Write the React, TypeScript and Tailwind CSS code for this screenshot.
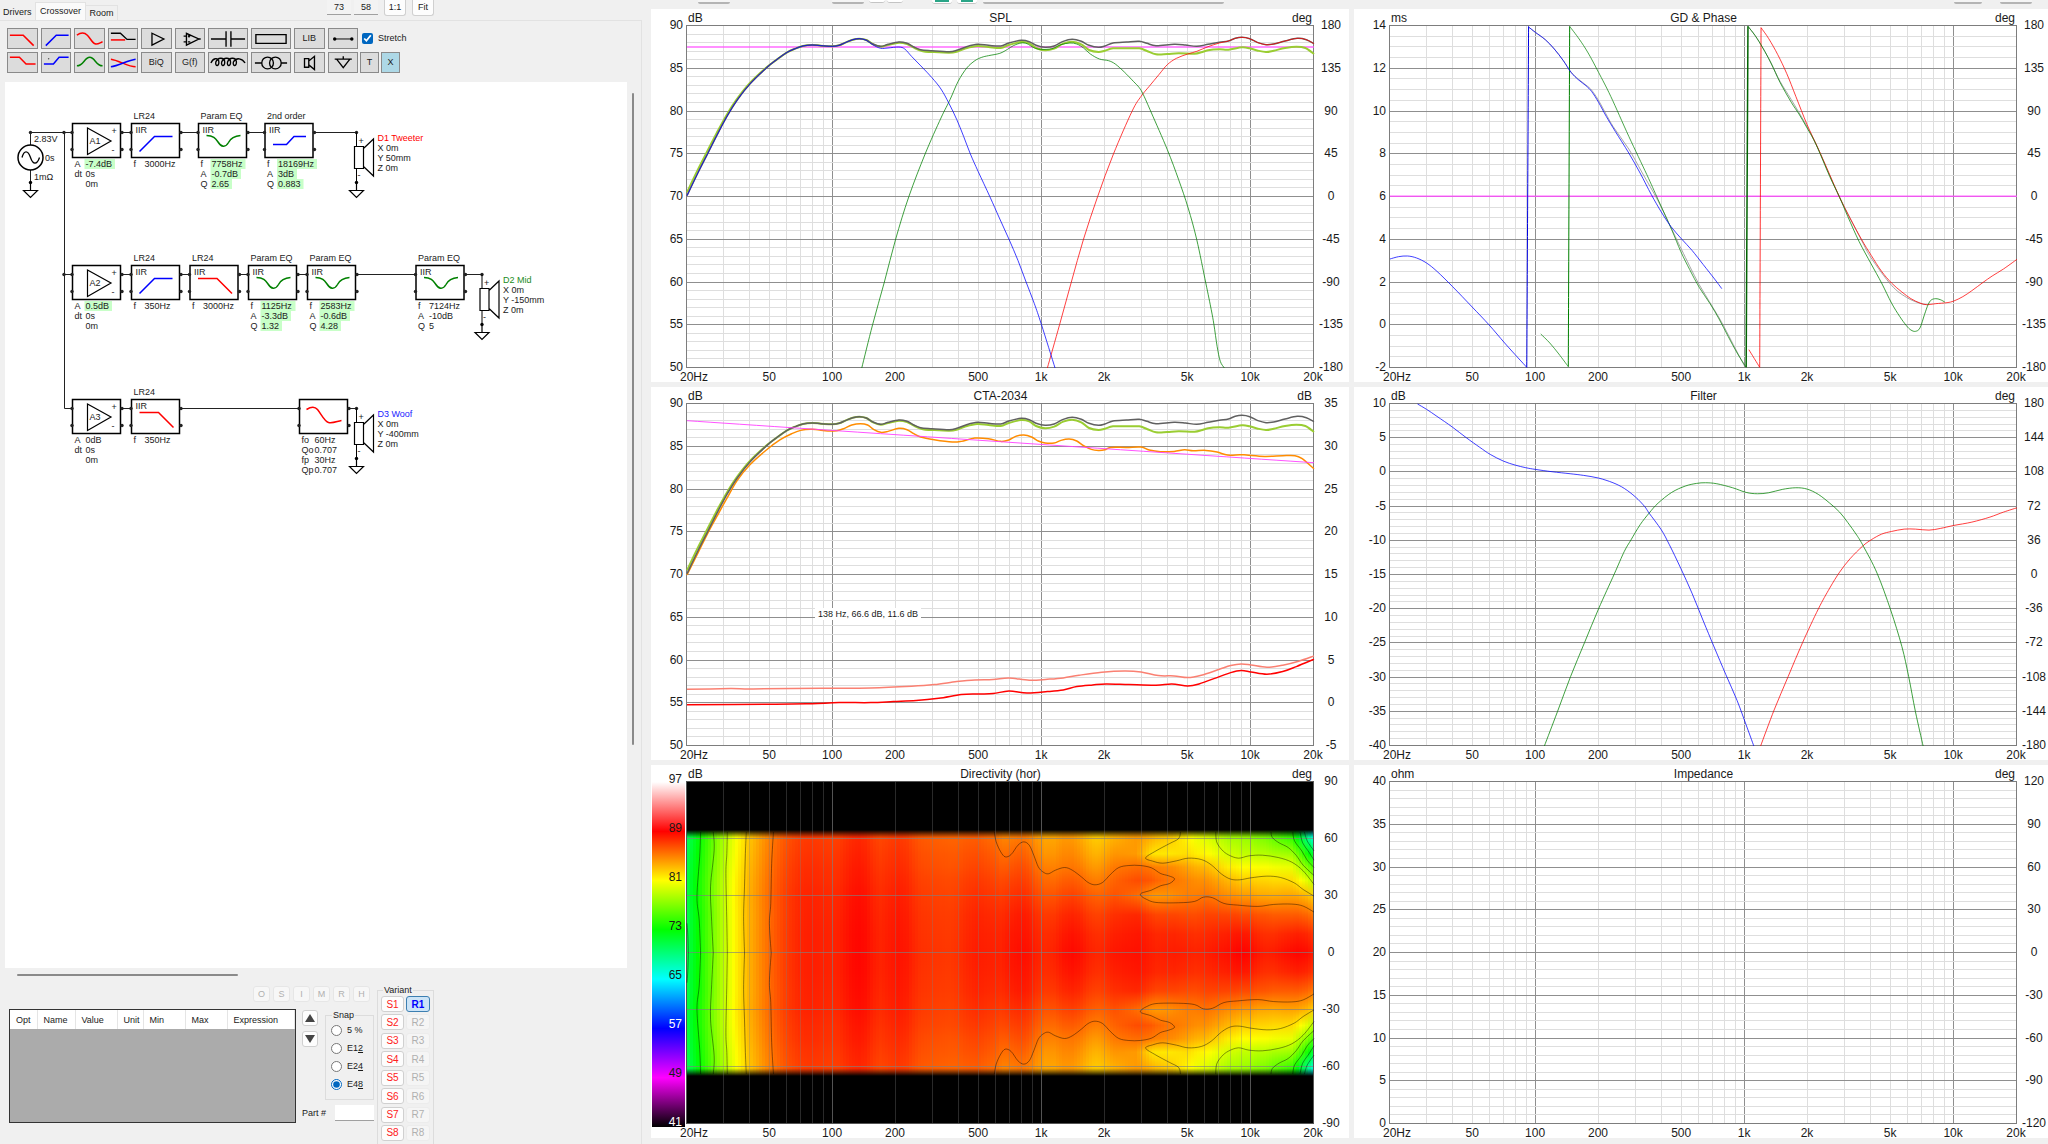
import type { ReactNode } from 'react'

type Point = [number, number]

const PLOT = { left: 36, top: 17, width: 627, height: 342 }
const PANEL = { width: 698, height: 373 }

interface Box {
  x: number
  y: number
  w: number
  h: number
}

const BOX_SPL: Box = { x: 104, y: 79, w: 1385, h: 1026 }
const BOX_GD: Box = { x: 111, y: 79, w: 1389, h: 1026 }
const BOX_CTA: Box = { x: 104, y: 73, w: 1385, h: 1025 }
const BOX_FILTER: Box = { x: 111, y: 73, w: 1389, h: 1025 }
const BOX_DIR: Box = { x: 104, y: 55, w: 1385, h: 1028 }

function pts(text: string): Point[] {
  return text
    .trim()
    .split(/\s+/)
    .map((pair) => pair.split(',').map(Number) as Point)
}

function place(points: Point[], box: Box): Point[] {
  return points.map(([x, y]) => [
    PLOT.left + ((x - box.x) / box.w) * PLOT.width,
    PLOT.top + ((y - box.y) / box.h) * PLOT.height,
  ])
}

function smooth(points: Point[]) {
  let d = `M${points[0][0].toFixed(2)} ${points[0][1].toFixed(2)}`
  for (let i = 0; i < points.length - 1; i++) {
    const p0 = points[i - 1] ?? points[i]
    const p1 = points[i]
    const p2 = points[i + 1]
    const p3 = points[i + 2] ?? p2
    const c = [
      p1[0] + (p2[0] - p0[0]) / 6,
      p1[1] + (p2[1] - p0[1]) / 6,
      p2[0] - (p3[0] - p1[0]) / 6,
      p2[1] - (p3[1] - p1[1]) / 6,
      p2[0],
      p2[1],
    ]
    d += `C${c.map((n) => n.toFixed(2)).join(' ')}`
  }
  return d
}

const TOTAL = pts(`104,588 128,520 150,461 170,407 192,351 215,301 243,253 280,204 300,182 325,158 345,146 360,139
380,136 400,138 425,140 440,137 455,128 470,120 485,117 500,121 515,133 532,140 548,134 572,127 590,131 605,142
620,150 645,153 683,156 700,152 720,142 745,134 770,137 797,139 815,130 842,122 860,126 875,137 895,143 915,139
935,125 955,119 975,125 992,137 1013,143 1027,139 1045,130 1075,127 1103,125 1120,131 1140,138 1180,134 1205,136
1230,140 1255,134 1280,128 1300,124 1315,116 1330,113 1347,117 1365,129 1383,135 1400,133 1425,124 1452,116
1472,120 1489,132`)

const LISTENING = pts(`104,578 128,510 150,452 170,399 192,345 215,297 243,250 280,203 300,182 325,158 345,146 360,139
380,136 400,138 425,140 440,137 455,128 470,120 485,117 500,121 515,134 532,141 548,136 572,129 590,133 605,144
625,155 645,157 683,159 700,156 720,146 745,139 770,142 797,145 815,136 842,127 860,131 875,145 895,152 915,147
935,132 955,126 975,134 992,151 1013,157 1027,153 1045,146 1075,146 1103,146 1120,154 1140,164 1165,163 1190,161
1225,162 1240,158 1255,152 1280,149 1300,150 1330,143 1347,146 1365,153 1383,157 1400,153 1425,145 1450,141
1470,145 1489,163`)

const SPL_WOOF = pts(`104,588 128,520 150,461 170,407 192,351 215,301 243,253 280,204 300,182 325,158 345,146 360,139
380,136 400,138 425,140 440,137 455,128 470,120 485,117 500,122 515,136 532,146 548,145 572,142 585,148 600,170
625,205 645,234 665,268 683,312 700,360 715,410 730,463 747,515 773,591 794,655 815,718 835,782 853,847 871,911
887,975 917,1105`)
const SPL_MID = pts(`490,1105 514,975 540,847 565,718 594,591 630,463 665,355 685,300 703,245 722,205 740,183 755,173
770,168 795,161 812,149 825,138 842,130 855,132 870,144 885,149 910,147 930,135 950,130 965,133 980,145 995,163
1015,178 1035,183 1050,193 1070,217 1090,245 1103,264 1112,285 1130,340 1165,450 1190,540 1211,625 1230,720
1250,850 1262,930 1268,975 1275,1040 1282,1085 1291,1105`)
const SPL_TWEETER = pts(`900,1105 927,975 953,847 980,718 1011,591 1046,463 1087,335 1107,290 1125,260 1147,224
1165,195 1185,176 1210,163 1230,155 1255,141 1280,130 1300,124 1315,116 1330,113 1347,117 1365,129 1383,135
1400,133 1425,124 1452,116 1472,120 1489,132`)

const GD_WOOF_LOW = pts('111,778 130,771 150,769 170,775 192,790 215,815 249,860 293,922 330,975 365,1030 395,1075 414,1103')
const GD_WOOF_HIGH = pts(`418,82 433,98 455,120 475,148 495,183 512,218 528,240 545,258 558,276 573,308 590,350 610,395
640,460 665,520 690,585 712,637 733,680 757,718 780,752 805,795 830,838 846,867`)
const GD_MID_LOW = pts('445,1003 465,1030 485,1063 506,1101')
const GD_MID = pts(`509,80 530,118 550,160 573,218 600,290 640,410 680,525 705,600 735,690 755,755 775,810 796,863
820,912 840,958 860,1010 880,1060 900,1103`)
const GD_MID_HIGH = pts(`904,80 920,108 937,145 955,190 975,248 1000,308 1017,343 1035,385 1055,435 1085,530 1107,593
1125,650 1150,725 1177,793 1200,850 1222,910 1240,950 1255,978 1265,991 1275,995 1285,985 1295,945 1303,915
1310,901 1320,897 1330,900 1340,907`)
const GD_TWEETER_LOW = pts('906,1050 930,1103')
const GD_TWEETER = pts(`933,84 950,117 970,165 990,222 1010,290 1035,375 1060,448 1085,525 1107,593 1130,655 1155,718
1177,767 1200,815 1222,850 1245,877 1265,897 1285,910 1300,915 1320,912 1345,909 1360,904 1380,891 1400,873
1425,848 1445,829 1470,808 1500,779`)
const GD_SUM_A = pts(`418,82 433,98 455,120 475,148 495,183 512,217 528,238 545,256 558,272 575,307 605,380 640,448
670,520 705,604 735,688 757,750 796,855 840,954 880,1057 898,1103`)
const GD_SUM_B = pts(`904,80 920,108 937,145 955,190 975,245 1000,300 1035,381 1060,449 1107,593 1155,720 1177,775
1222,857 1255,893 1285,911 1300,915`)

const CTA_POWER = pts(`104,585 128,520 150,460 170,410 192,356 215,302 243,255 280,210 310,180 335,162 355,152 380,149
415,154 435,153 450,147 468,136 487,132 503,136 517,150 532,158 548,155 572,146 590,150 605,162 620,172 650,180
690,187 710,185 740,175 770,177 797,185 815,181 830,170 848,166 865,172 880,184 895,190 915,190 930,182 948,178
965,184 980,198 997,209 1013,212 1027,210 1040,203 1075,203 1107,202 1125,211 1150,216 1180,215 1203,210 1222,213
1250,212 1275,217 1298,226 1325,225 1340,226 1380,230 1420,228 1447,228 1462,236 1489,267`)
const CTA_DI_POWER = pts(`104,928 200,926 250,927 400,925 510,924 600,919 650,914 700,905 740,900 780,899 815,894
860,901 900,898 935,894 970,886 1020,877 1070,873 1107,876 1145,887 1180,888 1210,893 1240,886 1280,868 1305,857
1328,852 1350,855 1385,862 1420,856 1455,844 1489,828`)
const CTA_DI_EARLY = pts(`104,974 300,973 380,971 440,968 510,968 560,965 610,962 660,955 710,944 745,942 780,941
815,933 855,939 900,935 935,930 965,920 1000,915 1030,912 1080,914 1140,916 1175,912 1210,918 1235,912 1280,890
1305,878 1328,872 1350,876 1385,883 1420,875 1450,860 1489,838`)

const FILTER_WOOF = pts(`172,73 192,89 215,110 249,142 280,174 310,203 333,224 362,244 388,256 412,264 433,269 470,276
510,282 540,287 573,295 605,309 630,326 655,352 675,380 685,400 712,450 730,495 755,565 780,640 805,723 828,798
855,884 880,962 900,1035 917,1098`)
const FILTER_MID = pts(`453,1098 482,995 511,890 542,788 573,687 608,582 630,515 645,480 665,435 685,400 705,370
735,338 765,319 790,311 810,309 835,312 870,324 900,338 925,342 950,339 980,329 1010,324 1035,328 1060,344
1085,370 1107,397 1125,428 1145,466 1160,500 1190,580 1220,690 1245,800 1260,890 1275,995 1292,1098`)
const FILTER_TWEETER = pts(`932,1098 962,990 993,890 1025,788 1060,687 1085,625 1107,577 1130,537 1158,499 1177,480
1200,463 1222,455 1250,448 1275,448 1305,451 1330,446 1360,437 1400,427 1440,412 1470,397 1500,384`)

const FREQ_LABELS: [number, string][] = [
  [50, '50'],
  [100, '100'],
  [200, '200'],
  [500, '500'],
  [1000, '1k'],
  [2000, '2k'],
  [5000, '5k'],
  [10000, '10k'],
  [20000, '20k'],
]

const GRID_FREQS = [10, 100, 1000, 10000].flatMap((decade) =>
  [1, 2, 3, 4, 5, 6, 7, 8, 9].map((n) => n * decade),
).filter((f) => f > 20 && f < 20000)

function freqX(f: number) {
  return PLOT.left + (Math.log10(f / 20) / 3) * PLOT.width
}

function steps(from: number, to: number, step: number) {
  const out: number[] = []
  for (let v = from; v >= to; v -= step) out.push(v)
  return out
}

interface TraceProps {
  points: Point[]
  box: Box
  color: string
  width?: number
  opacity?: number
}

function Trace({ points, box, color, width = 1, opacity = 1 }: TraceProps) {
  return (
    <path d={smooth(place(points, box))} fill="none" stroke={color} strokeWidth={width} strokeOpacity={opacity} />
  )
}

interface ChartProps {
  title: string
  leftUnit: string
  rightUnit: string
  left: number[]
  right: number[]
  minor: number
  dark?: boolean
  under?: ReactNode
  children?: ReactNode
}

function Chart({ title, leftUnit, rightUnit, left, right, minor, dark, under, children }: ChartProps) {
  const rows = right.length - 1
  const bottom = PLOT.top + PLOT.height
  const end = PLOT.left + PLOT.width
  const rowY = (i: number, n: number) => Math.round(PLOT.top + (i / n) * PLOT.height) - 0.5
  const major = dark ? 'rgba(128,128,128,0.65)' : '#8f8f8f'
  const light = dark ? 'rgba(128,128,128,0.32)' : '#dedede'

  return (
    <section className="bg-white" aria-label={title}>
      <svg
        viewBox={`0 0 ${PANEL.width} ${PANEL.height}`}
        className="block h-auto w-full overflow-visible font-['Liberation_Sans',Arial,sans-serif] text-xs"
        fill="#1a1a1a"
      >
        {under}
        <g strokeWidth="1">
          {GRID_FREQS.map((f) => (
            <line
              key={f}
              x1={Math.round(freqX(f)) - 0.5}
              x2={Math.round(freqX(f)) - 0.5}
              y1={PLOT.top}
              y2={bottom}
              stroke={[100, 1000, 10000].includes(f) ? major : light}
            />
          ))}
          {Array.from({ length: rows * minor + 1 }, (_, i) => (
            <line
              key={i}
              x1={PLOT.left}
              x2={end}
              y1={rowY(i, rows * minor)}
              y2={rowY(i, rows * minor)}
              stroke={i % minor === 0 ? major : light}
            />
          ))}
          <rect
            x={PLOT.left - 0.5}
            y={PLOT.top - 0.5}
            width={PLOT.width}
            height={PLOT.height}
            fill="none"
            stroke={dark ? '#555' : '#7d7d7d'}
          />
        </g>
        {children}
        <text x="37" y="13">
          {leftUnit}
        </text>
        <text x={PLOT.left + PLOT.width / 2} y="13" textAnchor="middle">
          {title}
        </text>
        <text x="661" y="13" textAnchor="end">
          {rightUnit}
        </text>
        {left.map((v, i) => (
          <text key={v} x="32" y={rowY(i, left.length - 1) + 3.5} textAnchor="end">
            {v}
          </text>
        ))}
        {right.map((v, i) => (
          <text key={v} x="680" y={rowY(i, rows) + 3.5} textAnchor="middle">
            {v}
          </text>
        ))}
        <text x="43" y="372" textAnchor="middle">
          20Hz
        </text>
        {FREQ_LABELS.map(([f, label]) => (
          <text key={label} x={freqX(f) - 1} y="372" textAnchor="middle">
            {label}
          </text>
        ))}
      </svg>
    </section>
  )
}

const PHASE = steps(180, -180, 45)

function HLine({ y, box }: { y: number; box: Box }) {
  const [[x1, y1], [x2, y2]] = place([[box.x, y], [box.x + box.w, y]], box)
  return <line x1={x1} x2={x2} y1={y1} y2={y2} stroke="#ff50ff" strokeWidth="1.5" strokeOpacity="0.85" />
}

function SplChart() {
  return (
    <Chart title="SPL" leftUnit="dB" rightUnit="deg" left={steps(90, 50, 5)} right={PHASE} minor={5}>
      <HLine y={142} box={BOX_SPL} />
      <Trace points={LISTENING} box={BOX_SPL} color="#9acd32" width={2} />
      <Trace points={TOTAL} box={BOX_SPL} color="#606060" width={1.5} />
      <Trace points={SPL_TWEETER} box={BOX_SPL} color="#ff0000" opacity={0.75} />
      <Trace points={SPL_MID} box={BOX_SPL} color="#008000" opacity={0.75} />
      <Trace points={SPL_WOOF} box={BOX_SPL} color="#0000ff" opacity={0.75} />
    </Chart>
  )
}

function PhaseChart() {
  return (
    <Chart title="GD & Phase" leftUnit="ms" rightUnit="deg" left={steps(14, -2, 2)} right={PHASE} minor={4}>
      <HLine y={590} box={BOX_GD} />
      <Trace points={GD_SUM_A} box={BOX_GD} color="#909090" opacity={0.8} />
      <Trace points={GD_SUM_B} box={BOX_GD} color="#909090" opacity={0.8} />
      <Trace points={GD_TWEETER_LOW} box={BOX_GD} color="#ff0000" opacity={0.75} />
      <Trace points={pts('930,1103 933,84')} box={BOX_GD} color="#ff0000" opacity={0.8} />
      <Trace points={GD_TWEETER} box={BOX_GD} color="#ff0000" opacity={0.75} />
      <Trace points={GD_MID_LOW} box={BOX_GD} color="#008000" opacity={0.7} />
      <Trace points={pts('506,1101 509,80')} box={BOX_GD} color="#008000" />
      <Trace points={GD_MID} box={BOX_GD} color="#008000" opacity={0.7} />
      <Trace points={pts('900,1103 904,80')} box={BOX_GD} color="#006400" width={1.5} />
      <Trace points={GD_MID_HIGH} box={BOX_GD} color="#008000" opacity={0.75} />
      <Trace points={GD_WOOF_LOW} box={BOX_GD} color="#0000ff" opacity={0.75} />
      <Trace points={pts('414,1103 418,80')} box={BOX_GD} color="#0000e0" />
      <Trace points={GD_WOOF_HIGH} box={BOX_GD} color="#0000ff" opacity={0.75} />
    </Chart>
  )
}

function CtaChart() {
  return (
    <Chart title="CTA-2034" leftUnit="dB" rightUnit="dB" left={steps(90, 50, 5)} right={steps(35, -5, 5)} minor={5}>
      <Trace points={CTA_POWER} box={BOX_CTA} color="#ff8c00" width={1.5} />
      <Trace points={LISTENING} box={BOX_SPL} color="#9acd32" width={2} />
      <Trace points={TOTAL} box={BOX_SPL} color="#606060" width={1.5} />
      <Trace points={pts('104,123 1489,249')} box={BOX_CTA} color="#ff40ff" opacity={0.9} />
      <Trace points={CTA_DI_POWER} box={BOX_CTA} color="#fa8072" width={1.5} />
      <Trace points={CTA_DI_EARLY} box={BOX_CTA} color="#ff0000" width={1.5} />
      <rect x="164" y="221" width="106" height="12" fill="#fff" />
      <text x="167" y="230" className="text-[9px]">
        138 Hz, 66.6 dB, 11.6 dB
      </text>
    </Chart>
  )
}

function FilterChart() {
  return (
    <Chart title="Filter" leftUnit="dB" rightUnit="deg" left={steps(10, -40, 5)} right={steps(180, -180, 36)} minor={5}>
      <Trace points={FILTER_TWEETER} box={BOX_FILTER} color="#ff0000" opacity={0.75} />
      <Trace points={FILTER_MID} box={BOX_FILTER} color="#008000" opacity={0.75} />
      <Trace points={FILTER_WOOF} box={BOX_FILTER} color="#0000ff" opacity={0.75} />
    </Chart>
  )
}

// Off-axis drop in dB: [position, one value for each of ANGLES]
const ANGLES = [0, 10, 20, 30, 38, 45, 52, 60, 64]
const DROPS: number[][] = [
  [104, 0, 0.1, 0.1, 0.4, 0.4, 0.2, 0, -0.3, -0.3],
  [200, 0, 0, 0, 0.1, 0, -0.2, -0.4, -0.6, -0.6],
  [425, 0, 0, -0.1, -0.2, -0.4, -0.5, -0.7, -0.9, -1],
  [683, 0, -0.1, -0.2, -0.4, -0.6, -0.9, -1.1, -1.4, -1.5],
  [784, 0, -0.1, -0.3, -0.7, -1.1, -1.5, -1.9, -2.4, -2.5],
  [807, 0, -0.1, -0.4, -0.9, -1.4, -2, -2.6, -3.3, -3.4],
  [848, 0, -0.2, -0.4, -1, -1.5, -2, -2.6, -3.3, -3.5],
  [895, 0, -0.2, -0.6, -1.4, -2.1, -2.8, -3.5, -4, -4.2],
  [938, 0, -0.3, -0.8, -1.7, -2.5, -3.3, -3.8, -4.3, -4.5],
  [1005, 0, -0.3, -0.9, -1.9, -2.8, -3.7, -4.5, -5.2, -5.3],
  [1050, 0, -0.3, -0.8, -1.9, -2.4, -3.1, -4, -4.8, -5],
  [1095, 0, -0.2, -0.7, -2.8, -1.9, -2.9, -4.3, -4.3, -4.5],
  [1130, 0, -0.2, -1.1, -3.8, -1.9, -2.9, -6.2, -4.7, -4.9],
  [1170, 0, -0.3, -1.3, -3.7, -2.8, -3.4, -6.4, -5.5, -5.4],
  [1211, 0, -0.4, -1.4, -3, -3.2, -4.2, -6, -6.8, -6.8],
  [1250, 0, -0.4, -1.2, -2.7, -3.6, -4.9, -6.9, -8.1, -8.2],
  [1300, 0, -0.5, -1.7, -4, -5.3, -7, -9, -10.3, -10.5],
  [1330, 0, -0.7, -2.3, -4.8, -6.4, -8, -9.9, -11, -11.2],
  [1383, 0, -0.6, -1.8, -4.4, -5.8, -7.2, -9.5, -11.2, -11.6],
  [1440, 0, -0.8, -2.6, -4.9, -6.6, -8.4, -10.8, -14, -15],
  [1489, 0, -0.9, -3, -5.8, -9.5, -13, -17, -22, -24],
]

const SCALE: [number, number[]][] = [
  [97, [255, 255, 255]],
  [89, [255, 0, 0]],
  [81, [255, 255, 0]],
  [73, [0, 255, 0]],
  [65, [0, 255, 255]],
  [57, [0, 0, 255]],
  [49, [255, 0, 255]],
  [41, [0, 0, 0]],
]

function heatColor(level: number) {
  const i = Math.min(6, Math.max(0, Math.floor((97 - level) / 8)))
  const t = (SCALE[i][0] - level) / 8
  const rgb = SCALE[i][1].map((c, k) => Math.round(c + (SCALE[i + 1][1][k] - c) * t))
  return `rgb(${rgb.join(',')})`
}

function onAxis(x: number) {
  const i = Math.max(1, TOTAL.findIndex((p) => p[0] >= x))
  const [a, b] = [TOTAL[i - 1], TOTAL[i]]
  const y = a[1] + ((x - a[0]) / (b[0] - a[0])) * (b[1] - a[1])
  return 90.3 - (y - 79) / 25.65
}

function dropAt(x: number, angle: number) {
  const i = Math.max(1, DROPS.findIndex((row) => row[0] >= x))
  const [a, b] = [DROPS[i - 1], DROPS[i]]
  const t = (x - a[0]) / (b[0] - a[0])
  return a[angle + 1] + (b[angle + 1] - a[angle + 1]) * t
}

const COLUMN = 3
const COLUMNS = Array.from({ length: PLOT.width / COLUMN }, (_, i) => {
  const x = BOX_DIR.x + (((i + 0.5) * COLUMN) / PLOT.width) * BOX_DIR.w
  return ANGLES.map((_, a) => heatColor(Math.min(89, onAxis(x) + dropAt(x, a))))
})
const STOPS = [...ANGLES.map((_, i) => ANGLES.length - 1 - i), ...ANGLES.map((_, i) => i).slice(1)]

const CONTOURS = [
  '295,205 291,300 289,420 286,480 290,569',
  '235,205 233,270 231,370 229,460 231,569',
  '193,205 192,270 190,330 192,480 193,569',
  '162,205 164,260 156,370 158,460 162,569',
  '134,205 132,280 126,400 131,470 134,569',
  '104,480 106,520 107,569',
  `783,205 787,235 797,265 807,280 820,273 835,245 848,235 860,245 870,275 880,310 890,325 902,331 918,320 938,312
   955,320 975,340 990,357 1005,364 1022,357 1040,332 1058,312 1080,306 1105,306 1130,313 1150,330 1168,337 1181,346
   1170,360 1150,367 1130,380 1108,389 1107,397 1118,407 1140,417 1190,418 1225,414 1245,401 1265,403 1290,420
   1320,425 1365,429 1400,423 1440,422 1465,428 1489,446`,
  `1194,205 1190,225 1170,240 1140,262 1117,283 1133,293 1155,299 1185,292 1211,284 1240,288 1262,304 1285,332
   1305,347 1325,349 1350,343 1385,338 1415,342 1445,358 1465,378 1489,398`,
  '1272,205 1274,235 1285,258 1300,274 1322,284 1345,277 1375,275 1410,282 1440,296 1465,322 1489,363',
  '1394,205 1397,222 1412,238 1432,252 1450,276 1465,305 1489,336',
  '1442,205 1446,232 1462,262 1474,290 1489,312',
  '1458,205 1464,238 1476,262 1489,290',
  '1468,205 1474,232 1489,262',
].map(pts)

function DirectivityChart() {
  const top = 65
  const height = 246

  const heat = (
    <>
      <defs>
        {COLUMNS.map((colors, i) => (
          <linearGradient key={i} id={`heat-${i}`} x1="0" x2="0" y1="0" y2="1">
            {STOPS.map((a, k) => {
              const sign = k < ANGLES.length ? -1 : 1
              return <stop key={k} offset={0.5 + (sign * ANGLES[a]) / 129} stopColor={colors[a]} />
            })}
          </linearGradient>
        ))}
        <linearGradient id="edge" x1="0" x2="0" y1="0" y2="1">
          <stop offset="0" stopColor="#000" />
          <stop offset="0.032" stopColor="#000" stopOpacity="0" />
          <stop offset="0.968" stopColor="#000" stopOpacity="0" />
          <stop offset="1" stopColor="#000" />
        </linearGradient>
        <linearGradient id="scale" x1="0" x2="0" y1="0" y2="1">
          {SCALE.map(([level, rgb]) => (
            <stop key={level} offset={(97 - level) / 56} stopColor={`rgb(${rgb.join(',')})`} />
          ))}
        </linearGradient>
      </defs>
      <rect x={PLOT.left} y={PLOT.top} width={PLOT.width} height={PLOT.height} fill="#000" />
      <g shapeRendering="crispEdges">
        {COLUMNS.map((_, i) => (
          <rect key={i} x={PLOT.left + i * COLUMN} y={top} width={COLUMN} height={height} fill={`url(#heat-${i})`} />
        ))}
      </g>
      <rect x={PLOT.left} y={top} width={PLOT.width} height={height} fill="url(#edge)" />
      <rect x="1" y={PLOT.top} width="33" height="345" fill="url(#scale)" />
      {SCALE.map(([level], i) => (
        <text key={level} x="31" y={18 + i * 49} textAnchor="end" fill={level === 57 || level === 41 ? '#fff' : '#1a1a1a'}>
          {level}
        </text>
      ))}
    </>
  )

  return (
    <Chart
      title="Directivity (hor)"
      leftUnit="dB"
      rightUnit="deg"
      left={[]}
      right={steps(90, -90, 30)}
      minor={1}
      dark
      under={heat}
    >
      {CONTOURS.map((points, i) => (
        <g key={i}>
          <Trace points={points} box={BOX_DIR} color="#000000" opacity={0.42} />
          <Trace points={points.map(([x, y]): Point => [x, 1138 - y])} box={BOX_DIR} color="#000000" opacity={0.42} />
        </g>
      ))}
    </Chart>
  )
}

function ImpedanceChart() {
  return (
    <Chart title="Impedance" leftUnit="ohm" rightUnit="deg" left={steps(40, 0, 5)} right={steps(120, -120, 30)} minor={5} />
  )
}

const SHAPES = {
  highpass: { d: 'M8 28L23 13H41', color: '#0000ff' },
  lowpass: { d: 'M8 13H27L42 28', color: '#ff0000' },
  notch: { d: 'M8 12C15 12 17 15 19.500 18.500C22.500 23.500 27 24.500 30 19C32 15 35 12.500 42 12', color: '#008000' },
  shelf: { d: 'M8 21H21.500L29 13H41', color: '#0000ff' },
  linkwitz: { d: 'M7 10C11 7.500 15 6.500 18 10C22 15 25 22 29 23C33 24 37 22 42 21', color: '#ff0000' },
}

interface Param {
  name: string
  value: string
  tuned?: boolean
}

interface BlockData {
  x: number
  y: number
  title?: string
  shape?: keyof typeof SHAPES
  amp?: string
  params: Param[]
}

const p = (name: string, value: string, tuned = false): Param => ({ name, value, tuned })

const ROWS = [123.5, 265.5, 399.5]

const BLOCKS: BlockData[] = [
  { x: 72.5, y: ROWS[0], amp: 'A1', params: [p('A', '-7.4dB', true), p('dt', '0s'), p('', '0m')] },
  { x: 131.5, y: ROWS[0], title: 'LR24', shape: 'highpass', params: [p('f', '3000Hz')] },
  { x: 198.5, y: ROWS[0], title: 'Param EQ', shape: 'notch', params: [p('f', '7758Hz', true), p('A', '-0.7dB', true), p('Q', '2.65', true)] },
  { x: 265, y: ROWS[0], title: '2nd order', shape: 'shelf', params: [p('f', '18169Hz', true), p('A', '3dB', true), p('Q', '0.883', true)] },
  { x: 72.5, y: ROWS[1], amp: 'A2', params: [p('A', '0.5dB', true), p('dt', '0s'), p('', '0m')] },
  { x: 131.5, y: ROWS[1], title: 'LR24', shape: 'highpass', params: [p('f', '350Hz')] },
  { x: 190, y: ROWS[1], title: 'LR24', shape: 'lowpass', params: [p('f', '3000Hz')] },
  { x: 248.5, y: ROWS[1], title: 'Param EQ', shape: 'notch', params: [p('f', '1125Hz', true), p('A', '-3.3dB', true), p('Q', '1.32', true)] },
  { x: 307.5, y: ROWS[1], title: 'Param EQ', shape: 'notch', params: [p('f', '2583Hz', true), p('A', '-0.6dB', true), p('Q', '4.28', true)] },
  { x: 416, y: ROWS[1], title: 'Param EQ', shape: 'notch', params: [p('f', '7124Hz'), p('A', '-10dB'), p('Q', '5')] },
  { x: 72.5, y: ROWS[2], amp: 'A3', params: [p('A', '0dB'), p('dt', '0s'), p('', '0m')] },
  { x: 131.5, y: ROWS[2], title: 'LR24', shape: 'lowpass', params: [p('f', '350Hz')] },
  { x: 299.5, y: ROWS[2], shape: 'linkwitz', params: [p('fo', '60Hz'), p('Qo', '0.707'), p('fp', '30Hz'), p('Qp', '0.707')] },
]

function textWidth(value: string) {
  const widths: Record<string, number> = { '.': 2.5, '-': 3, H: 6.5, z: 4.5, B: 6 }
  return [...value].reduce((sum, c) => sum + (widths[c] ?? 5), 0)
}

function Block({ x, y, title, shape, amp, params }: BlockData) {
  return (
    <g transform={`translate(${x} ${y})`}>
      <rect width="48" height="34" fill="#fff" stroke="#000" strokeWidth="1.500" />
      {[-0.5, 49.5].flatMap((cx) =>
        [9, 26].map((cy) => <circle key={`${cx}-${cy}`} cx={cx} cy={cy} r="1.700" />),
      )}
      {title && (
        <text x="2" y="-5">
          {title}
        </text>
      )}
      {amp && (
        <>
          <path d="M15 4.500V31L38.500 17.500Z" fill="none" stroke="#000" strokeWidth="1.200" />
          <text x="17" y="20">
            {amp}
          </text>
          <text x="39" y="10">
            +
          </text>
          <text x="39" y="29">
            -
          </text>
        </>
      )}
      {title && shape && (
        <text x="4" y="9">
          IIR
        </text>
      )}
      {shape && <path d={SHAPES[shape].d} fill="none" stroke={SHAPES[shape].color} strokeWidth="1.500" />}
      {params.map(({ name, value, tuned }, i) => (
        <g key={i} transform={`translate(0 ${43.5 + i * 10})`}>
          {tuned && <rect x="12" y="-8" width={textWidth(value) + 4} height="10" fill="#c8ffc8" />}
          <text x="2">{name}</text>
          <text x={shape === 'linkwitz' ? 15 : 13}>{value}</text>
        </g>
      ))}
    </g>
  )
}

function Ground({ x, y }: { x: number; y: number }) {
  return (
    <g transform={`translate(${x} ${y})`} fill="none" stroke="#000">
      <circle r="1.700" fill="#000" stroke="none" />
      <path d="M0 0V8M-7 8H7L0 15Z" strokeWidth="1.200" />
    </g>
  )
}

interface SpeakerProps {
  x: number
  y: number
  name: string
  color: string
  offset: string
}

function Speaker({ x, y, name, color, offset }: SpeakerProps) {
  return (
    <>
      <g transform={`translate(${x} ${y})`}>
        <circle r="1.700" />
        <path d="M0 0V14M0 36V50" stroke="#000" />
        <path d="M-2 14H7V36H-2ZM7 16L17 6.500V43.500L7 34" fill="none" stroke="#000" strokeWidth="1.200" />
        <text x="2" y="11">
          +
        </text>
        <text x="1" y="45">
          -
        </text>
        <text x="21" y="8" fill={color}>
          {name}
        </text>
        {['X 0m', offset, 'Z 0m'].map((line, i) => (
          <text key={line} x="21" y={18 + i * 10}>
            {line}
          </text>
        ))}
      </g>
      <Ground x={x} y={y + 50} />
    </>
  )
}

function Schematic() {
  return (
    <svg
      viewBox="5 82 622 400"
      className="block h-auto w-full font-['Liberation_Sans',Arial,sans-serif] text-[9px]"
      fill="#222"
    >
      <path
        d="M30.500 182V132.500H356.500M64.500 132.500V408.500M64.500 274.500H482.500M64.500 408.500H356.500"
        fill="none"
        stroke="#222"
      />
      <circle cx="30.500" cy="132.500" r="1.700" />
      <circle cx="64" cy="132.500" r="1.700" />
      <circle cx="64" cy="274.500" r="1.700" />
      <circle cx="30.500" cy="157.500" r="12.500" fill="#fff" stroke="#000" strokeWidth="1.500" />
      <path d="M22 157.500C24 150 28 150 30.500 157.500S37 165 39.500 157.500" fill="none" stroke="#000" strokeWidth="1.300" />
      <text x="34" y="142">
        2.83V
      </text>
      <text x="45" y="161">
        0s
      </text>
      <text x="34" y="180">
        1mΩ
      </text>
      <Ground x={30.5} y={182.5} />
      {BLOCKS.map((block) => (
        <Block key={`${block.x}-${block.y}`} {...block} />
      ))}
      <Speaker x={356.5} y={132.5} name="D1 Tweeter" color="#ff0000" offset="Y 50mm" />
      <Speaker x={482} y={274.5} name="D2 Mid" color="#228b22" offset="Y -150mm" />
      <Speaker x={356.5} y={408.5} name="D3 Woof" color="#2222ff" offset="Y -400mm" />
    </svg>
  )
}

interface Tool {
  label: string
  wide?: boolean
  icon?: ReactNode
}

const RED = { stroke: '#ff0000', strokeWidth: 1.6 }
const BLUE = { stroke: '#0000ff', strokeWidth: 1.6 }
const BLACK = { stroke: '#000', strokeWidth: 1.4 }

const TOOLS: Tool[][] = [
  [
    { label: 'Low pass', icon: <path d="M2 7H16L27 18" {...RED} /> },
    { label: 'High pass', icon: <path d="M4 18L15 7H28" {...BLUE} /> },
    { label: 'Linkwitz transform', icon: <path d="M2 7C6 4 10 4 13 7S18 15 21 16S26 15 29 14" {...RED} /> },
    {
      label: 'Crossover pair',
      icon: (
        <>
          <path d="M2 12H17" {...RED} />
          <path d="M2 5H12L19 11.500H28" {...BLACK} />
        </>
      ),
    },
    { label: 'Amplifier', icon: <path d="M10.500 5V17.500L23 11Z" {...BLACK} /> },
    { label: 'Operational amplifier', icon: <path d="M11 5V17.500L24 11ZM8 8H11M8 14H11M24 11H26M12.500 8H15M12.500 14H15M13.700 6.500V9.500" {...BLACK} /> },
    { label: 'Capacitor', wide: true, icon: <path d="M2 11H17M23 11H37M17.500 3V19M22.500 3V19" {...BLACK} /> },
    { label: 'Resistor', wide: true, icon: <path d="M4 6.500H35V15.500H4Z" {...BLACK} /> },
    { label: 'LIB' },
    {
      label: 'Wire',
      icon: (
        <>
          <path d="M6 11H24" stroke="#000" />
          <circle cx="6" cy="11" r="1.800" fill="#000" />
          <circle cx="24" cy="11" r="1.800" fill="#000" />
        </>
      ),
    },
  ],
  [
    { label: 'Low shelf', icon: <path d="M2 5H12L19 12H29" {...RED} /> },
    {
      label: 'High shelf',
      icon: (
        <>
          <path d="M2 12H12L18 5H28" {...BLUE} />
          <circle cx="7" cy="6.500" r="0.800" fill="#555" />
        </>
      ),
    },
    { label: 'Peak', icon: <path d="M2 14C9 14 10 5 15.500 5S22 14 29 14" stroke="#008000" strokeWidth="1.600" /> },
    {
      label: 'Phase',
      icon: (
        <>
          <path d="M2 7C10 8 20 15 28 15" {...RED} />
          <path d="M2 15C10 14 20 8 28 7" {...BLUE} />
        </>
      ),
    },
    { label: 'BiQ' },
    { label: 'G(f)' },
    {
      label: 'Inductor',
      wide: true,
      icon: (
        <path
          d="M2 11C4 6 9 5 10 9C11 15 6 15 7 10C9 5 15 5 16 9C17 15 12 15 13 10C15 5 21 5 22 9C23 15 18 15 19 10C21 5 27 5 28 9C29 15 24 15 25 10C28 5 34 6 37 11"
          {...BLACK}
        />
      ),
    },
    {
      label: 'Transformer',
      wide: true,
      icon: (
        <>
          <circle cx="16" cy="11" r="6" {...BLACK} />
          <circle cx="24" cy="11" r="6" {...BLACK} />
          <path d="M3 11H10M30 11H36" {...BLACK} />
        </>
      ),
    },
    { label: 'Driver', icon: <path d="M10 6.500H14.500V15.500H10ZM14.500 9L20.500 4V18L14.500 13" {...BLACK} /> },
    { label: 'Ground', icon: <path d="M6 7H24M8 7L15 16L22 7M15 4V7" {...BLACK} /> },
  ],
]

function Toolbar() {
  return (
    <div className="mt-[7px] ml-[7px] flex flex-col gap-[3px]">
      {TOOLS.map((row, r) => (
        <div key={r} className="flex items-center gap-[2px]">
          <div className="flex w-[351px] gap-[3px]">
            {row.map(({ label, wide, icon }) => (
              <button
                key={label}
                type="button"
                aria-label={label}
                className={`flex h-[21px] items-center justify-center overflow-hidden border border-[#8a8a8a] bg-[#dcdcdc] ${wide ? 'w-10 shrink-0' : 'flex-1'}`}
              >
                {icon ? (
                  <svg viewBox={wide ? '0 0 39 21' : '0 0 30 21'} className="h-[21px] w-full" fill="none">
                    {icon}
                  </svg>
                ) : (
                  label
                )}
              </button>
            ))}
          </div>
          {r === 0 ? (
            <label className="flex items-center gap-[5px] pl-[2px]">
              <input type="checkbox" defaultChecked className="size-[11px] accent-[#0067c0]" />
              Stretch
            </label>
          ) : (
            <>
              <button type="button" className="h-[21px] w-[19px] border border-[#8a8a8a] bg-[#dcdcdc]">
                T
              </button>
              <button type="button" className="h-[21px] w-[19px] border border-[#8a8a8a] bg-[#add8e6]">
                X
              </button>
            </>
          )}
        </div>
      ))}
    </div>
  )
}

function TabStrip() {
  return (
    <header className="flex h-[21px] items-end border-b border-[#e2e2e2]">
      <nav className="flex h-full items-end">
        <a href="#drivers" className="flex h-[15px] w-[35px] items-center pl-[3px]">
          Drivers
        </a>
        <a
          href="#crossover"
          aria-current="page"
          className="flex h-[18px] w-[51px] items-center justify-center border-x border-t border-[#e2e2e2] bg-[#fafafa]"
        >
          Crossover
        </a>
        <a href="#room" className="flex h-[15px] w-8 items-center justify-center border-t border-r border-[#e2e2e2]">
          Room
        </a>
      </nav>
      <div className="ml-[209px] flex h-full items-start gap-[3px]">
        {['73', '58'].map((value) => (
          <button key={value} type="button" className="h-[15px] w-6 border-b border-[#a0a0a0] bg-[#f3f3f3]">
            {value}
          </button>
        ))}
        {['1:1', 'Fit'].map((value) => (
          <button
            key={value}
            type="button"
            className="ml-[3px] h-4 w-[22px] rounded-b-[3px] border border-t-0 border-[#d0d0d0] bg-[#fdfdfd]"
          >
            {value}
          </button>
        ))}
      </div>
    </header>
  )
}

const COLUMN_HEADS: [string, string][] = [
  ['Opt', 'w-[27px]'],
  ['Name', 'w-[38px]'],
  ['Value', 'w-[42px]'],
  ['Unit', 'w-[26px]'],
  ['Min', 'w-[42px]'],
  ['Max', 'w-[42px]'],
  ['Expression', ''],
]

function OptimizerTable() {
  return (
    <div className="ml-[9px] mt-[41px] h-[114px] w-[287px] shrink-0 border border-[#333] bg-[#ababab]">
      <table className="w-full table-fixed border-collapse bg-white">
        <thead>
          <tr className="h-[19px]">
            {COLUMN_HEADS.map(([name, width]) => (
              <th key={name} className={`border-r border-[#e5e5e5] pt-[2px] pl-[6px] text-left font-normal ${width}`}>
                {name}
              </th>
            ))}
          </tr>
        </thead>
      </table>
    </div>
  )
}

const SNAPS: [string, string][] = [
  ['5 %', ''],
  ['E1', '2'],
  ['E2', '4'],
  ['E4', '8'],
]

function SnapPanel() {
  return (
    <div className="ml-[6px] mt-[18px] w-[72px] shrink-0">
      <div className="-ml-[49px] flex gap-[3px]">
        {['O', 'S', 'I', 'M', 'R', 'H'].map((key) => (
          <button
            key={key}
            type="button"
            disabled
            className="h-4 w-[17px] shrink-0 rounded-[3px] border border-[#e6e6e6] bg-[#f7f7f7] text-[#b0b0b0]"
          >
            {key}
          </button>
        ))}
      </div>
      <div className="mt-2 flex justify-between">
        <div className="flex flex-col gap-[5px]">
          {['M2 11L7 3L12 11Z', 'M2 3L7 11L12 3Z'].map((d, i) => (
            <button
              key={d}
              type="button"
              aria-label={i === 0 ? 'Move up' : 'Move down'}
              className="size-4 rounded-[3px] border border-[#d0d0d0] bg-[#fdfdfd]"
            >
              <svg viewBox="0 0 14 14" className="size-full" fill="#444">
                <path d={d} />
              </svg>
            </button>
          ))}
        </div>
        <fieldset className="h-[90px] w-[49px] border border-[#dcdcdc]">
          <legend className="ml-[6px] px-[1px]">Snap</legend>
          <div className="flex flex-col gap-[7px] pt-1 pl-[5px]">
            {SNAPS.map(([name, key]) => (
              <label key={name} className="flex h-[11px] items-center gap-[5px] whitespace-nowrap">
                <input
                  type="radio"
                  name="snap"
                  defaultChecked={name === 'E4'}
                  className="m-0 size-[11px] shrink-0 accent-[#0067c0]"
                />
                <span>
                  {name}
                  {key && <u>{key}</u>}
                </span>
              </label>
            ))}
          </div>
        </fieldset>
      </div>
      <label className="mt-[5px] flex items-center justify-between whitespace-nowrap">
        Part #
        <input type="text" className="h-4 w-[39px] border-b border-[#a0a0a0] bg-white px-1" />
      </label>
    </div>
  )
}

function VariantPanel() {
  const slots = [1, 2, 3, 4, 5, 6, 7, 8]
  return (
    <fieldset className="-mb-4 ml-[3px] mt-[17px] w-[57px] border border-[#dcdcdc]">
      <legend className="ml-[5px] px-[1px]">Variant</legend>
      <div className="flex h-[145px] justify-between px-[3px]">
        <div className="flex flex-col justify-between">
          {slots.map((n) => (
            <button
              key={n}
              type="button"
              className="h-4 w-[23px] rounded-[3px] border border-[#d0d0d0] bg-[#fdfdfd] text-[10px] text-[#ff2020]"
            >
              S{n}
            </button>
          ))}
        </div>
        <div className="flex flex-col justify-between">
          {slots.map((n) => (
            <button
              key={n}
              type="button"
              disabled={n > 1}
              className={
                n === 1
                  ? 'h-4 w-6 rounded-[3px] border border-[#3c7fb1] bg-[#cce4f7] text-[10px] font-bold text-[#0000ff]'
                  : 'h-4 w-6 rounded-[3px] border border-[#ececec] bg-[#f5f5f5] text-[10px] text-[#b0b0b0]'
              }
            >
              R{n}
            </button>
          ))}
        </div>
      </div>
    </fieldset>
  )
}

function Editor() {
  return (
    <aside className="flex w-[642px] shrink-0 flex-col overflow-hidden">
      <TabStrip />
      <div className="flex min-h-0 flex-1 flex-col border-r border-[#e2e2e2]">
        <Toolbar />
        <div className="mt-[9px] ml-[5px] flex min-h-0 flex-1">
          <div className="w-[622px] overflow-hidden bg-white">
            <Schematic />
          </div>
          <div className="mt-[11px] ml-[5px] h-[652px] w-[2px] rounded-full bg-[#8a8a8a]" />
        </div>
        <div className="h-[176px] shrink-0">
          <div className="h-0">
            <div className="relative top-[6px] ml-[17px] h-[2px] w-[221px] rounded-full bg-[#8a8a8a]" />
          </div>
          <div className="flex h-full overflow-hidden">
            <OptimizerTable />
            <SnapPanel />
            <VariantPanel />
          </div>
        </div>
      </div>
    </aside>
  )
}

function TopStrip() {
  const field = 'h-1 rounded-b-[2px] border-b-2 border-[#b4b4b4] bg-[#f5f5f5]'
  const key = 'h-[3px] w-4 rounded-b-[3px] border-b border-[#c4c4c4] bg-white'
  const teal = 'flex h-1 w-5 justify-center rounded-b-[3px] border-b border-[#c4c4c4] bg-white'
  return (
    <div className="flex h-[9px] items-start">
      <input aria-label="Minimum frequency" className={`ml-[47px] w-8 ${field}`} />
      <input aria-label="Maximum frequency" className={`ml-[102px] w-8 ${field}`} />
      <button type="button" aria-label="Previous" className={`ml-[5px] ${key}`} />
      <button type="button" aria-label="Next" className={`ml-[2px] ${key}`} />
      <button type="button" aria-label="Save" className={`ml-[29px] ${teal}`}>
        <span className="h-[2px] w-[14px] bg-[#2aa587]" />
      </button>
      <button type="button" aria-label="Export" className={`ml-[5px] ${teal}`}>
        <span className="h-[2px] w-3 bg-[#2aa587]" />
      </button>
      <input aria-label="Notes" className={`ml-[6px] w-[241px] ${field}`} />
      <input aria-label="Angle" className={`ml-auto w-7 ${field}`} />
      <input aria-label="Distance" className={`mr-5 ml-[18px] w-8 ${field}`} />
    </div>
  )
}

export default function App() {
  return (
    <div className="flex h-screen overflow-hidden bg-[#f0f0f0] font-['Liberation_Sans',Arial,sans-serif] text-[9px] leading-[11px] text-[#1a1a1a]">
      <Editor />
      <main className="-mr-1 min-w-0 flex-1 pl-[9px]">
        <TopStrip />
        <div className="grid grid-cols-2 gap-[5px]">
          <SplChart />
          <PhaseChart />
          <CtaChart />
          <FilterChart />
          <DirectivityChart />
          <ImpedanceChart />
        </div>
      </main>
    </div>
  )
}
